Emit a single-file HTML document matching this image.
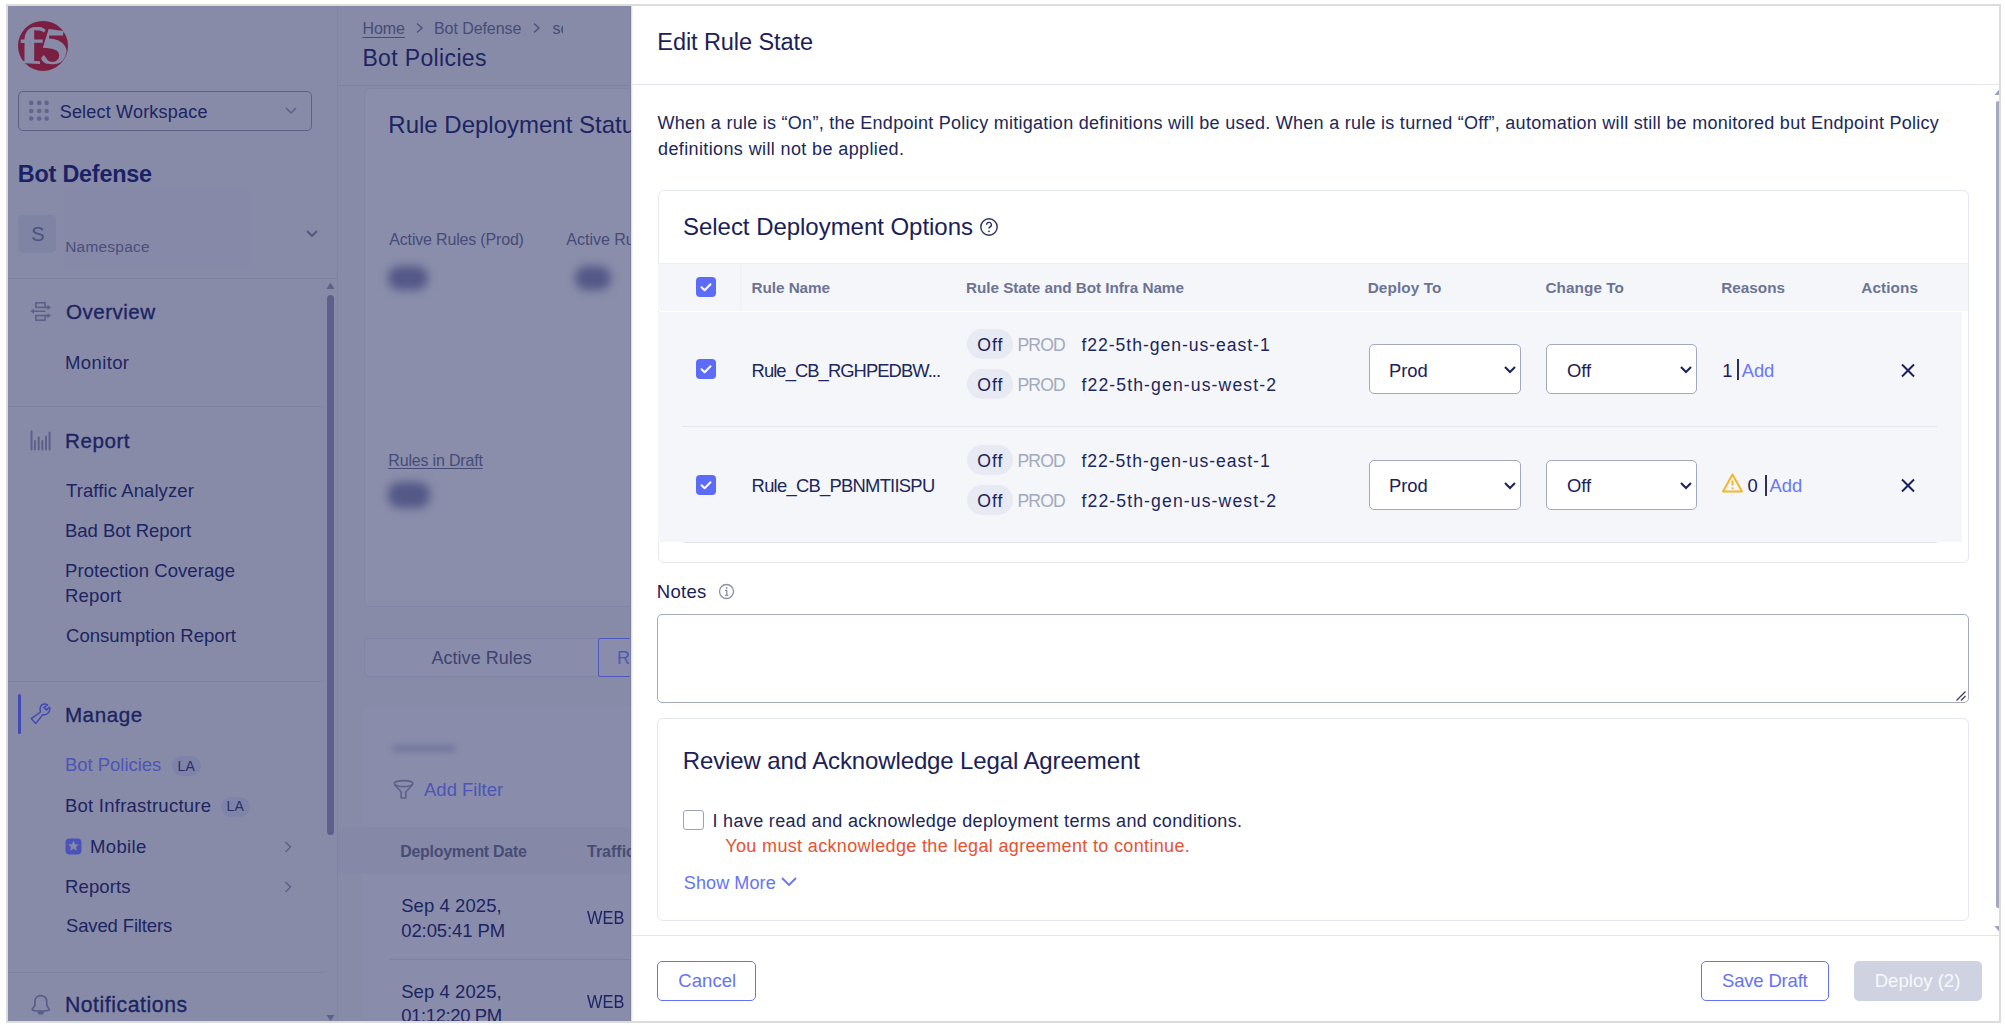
<!DOCTYPE html>
<html><head><meta charset="utf-8">
<style>
html,body{margin:0;padding:0;}
body{width:2005px;height:1025px;background:#fff;position:relative;overflow:hidden;font-family:"Liberation Sans",sans-serif;}
.a{position:absolute;box-sizing:border-box;}
.t{position:absolute;white-space:nowrap;line-height:1;font-family:"Liberation Sans",sans-serif;}
#bg{position:absolute;left:8px;top:6px;width:623px;height:1015px;overflow:hidden;background:#878ba8;}
#bgi{position:absolute;left:-8px;top:-6px;width:2005px;height:1025px;}
#modal{position:absolute;left:631px;top:6px;width:1368px;height:1015px;overflow:hidden;background:#fff;}
#mi{position:absolute;left:-631px;top:-6px;width:2005px;height:1025px;}
</style></head><body>
<div class="a" style="left:6px;top:4px;width:1995px;height:1019px;border:2px solid #dcdcdc;"></div>
<div id="bg"><div id="bgi">
<!-- sidebar border & header line -->
<div class="a" style="left:337px;top:0;width:1px;height:1025px;background:#7f83a3;"></div>
<div class="a" style="left:338px;top:85px;width:300px;height:1px;background:#7f83a3;"></div>
<!-- f5 logo -->
<svg class="a" style="left:0;top:0;" width="80" height="80" viewBox="0 0 80 80">
<circle cx="43" cy="45.9" r="25" fill="#7a1f42"/>
<path fill="#878ba8" d="M24.5 61 L24.5 42.9 L20.7 42.9 L20.7 39.4 L24.5 39.4 C24.6 33 28.5 27.3 35 27.1 L39.8 27.1 C42 27.3 44 28.3 45.6 30.2 L43.8 32.6 C42.5 31.3 41 30.5 39.3 30.4 L34.2 30.3 L34.2 39.4 L42.7 39.4 L42.7 42.7 L34.2 42.7 L34.2 61 L40 61.3 L40 64 L25 63.2 L20 60.5 Z"/>
<path fill="#878ba8" d="M48.65 29.03 L63.5 30.9 L63 35.58 L49.11 35.58 L49.11 38.39 C52 38.6 55 39 57.08 40.03 C61 41.5 64.8 44.5 65.98 48.23 C66.8 50 66.8 52 65.98 53.85 C65.5 56 64.8 57.8 63.63 59.47 C62 61.5 60.5 62.5 58.48 63.22 C56.5 64 54 64.2 51.46 64.15 C49 64.1 47 63.8 45.37 63.22 C43.8 62.5 42.5 61 41.62 59.47 L41.15 58.07 L43.73 55.02 L45.37 56.66 C46.2 58 47 59.5 48.18 60.41 C49.5 61.4 50.5 61.8 51.93 61.81 C53.5 61.8 55 61.5 56.14 60.88 C57.5 60 58.5 59 58.95 57.6 C59.3 56.3 59.3 55 58.95 53.85 C58.5 52.5 57.8 51.4 56.61 50.57 C55 49.5 53.5 49 51.46 48.7 C48.5 48.2 45.5 47.9 42.79 47.76 Z"/>
</svg>
<!-- select workspace -->
<div class="a" style="left:18px;top:91px;width:294px;height:40px;border:1px solid #5b6088;border-radius:5px;"></div>
<svg class="a" style="left:28px;top:100px;" width="22" height="22" viewBox="0 0 22 22">
<g fill="#62668f"><circle cx="3.2" cy="2.9" r="2.3"/><circle cx="11.2" cy="2.9" r="2.3"/><circle cx="18.6" cy="2.9" r="2.3"/>
<circle cx="3.2" cy="11" r="2.3"/><circle cx="11.2" cy="11" r="2.3"/><circle cx="18.6" cy="11" r="2.3"/>
<circle cx="3.2" cy="18.6" r="2.3"/><circle cx="11.2" cy="18.6" r="2.3"/><circle cx="18.6" cy="18.6" r="2.3"/></g></svg>
<svg class="a" style="left:284px;top:106px;" width="14" height="10" viewBox="0 0 14 10"><path d="M2 2 L7 7 L12 2" fill="none" stroke="#5b6088" stroke-width="1.5"/></svg>
<!-- namespace -->
<div class="a" style="left:18px;top:215px;width:38px;height:38px;background:#7f83a4;border-radius:5px;"></div>
<div class="a" style="left:64.5px;top:187px;width:184px;height:80px;background:#8689a7;"></div>
<svg class="a" style="left:305px;top:229px;" width="14" height="10" viewBox="0 0 14 10"><path d="M2 2 L7 7 L12 2" fill="none" stroke="#4f5480" stroke-width="1.8"/></svg>
<!-- dividers -->
<div class="a" style="left:8px;top:278px;width:329px;height:1px;background:#7f83a3;"></div>
<div class="a" style="left:8px;top:406px;width:317px;height:1px;background:#7f83a3;"></div>
<div class="a" style="left:8px;top:681px;width:317px;height:1px;background:#7f83a3;"></div>
<div class="a" style="left:8px;top:972px;width:317px;height:1px;background:#7f83a3;"></div>
<!-- sidebar scrollbar -->
<svg class="a" style="left:326px;top:281px;" width="9" height="9" viewBox="0 0 9 9"><path d="M0.5 8 L4.5 1.5 L8.5 8 Z" fill="#5d6189"/></svg>
<div class="a" style="left:326.5px;top:295px;width:7px;height:540px;background:#5d6189;border-radius:4px;"></div>
<svg class="a" style="left:326px;top:1014px;" width="9" height="8" viewBox="0 0 9 8"><path d="M0.5 1 L4.5 7 L8.5 1 Z" fill="#5d6189"/></svg>
<!-- icons -->
<svg class="a" style="left:0;top:0;" width="60" height="460" viewBox="0 0 60 460">
<g fill="none" stroke="#5c608b" stroke-width="1.6">
<rect x="35.9" y="302.8" width="9.2" height="4.6"/>
<rect x="35.9" y="315.6" width="9.2" height="4.6"/>
<path d="M45 307.4 H48.5 M33 311.3 H45.5 M45 315.6 H48.5"/></g>
<g fill="#5c608b"><path d="M47.5 304.8 L51 307.4 L47.5 310Z"/><path d="M34 308.8 L30.2 311.3 L34 313.8Z"/><path d="M47.5 313 L51 315.6 L47.5 318.2Z"/></g>
<g stroke="#5c608b" stroke-width="2" stroke-linecap="round">
<path d="M31.5 431.5 V449.5"/><path d="M34.9 441 V449.5"/><path d="M38.7 437.6 V449.5"/><path d="M42.3 441 V449.5"/><path d="M46 436.4 V449.5"/><path d="M49.6 432.6 V449.5"/></g>
</svg>
<div class="a" style="left:18px;top:694px;width:3px;height:40px;background:#4049b6;border-radius:1.5px;"></div>
<svg class="a" style="left:0;top:680px;" width="60" height="60" viewBox="0 680 60 60">
<path d="M40.6 712 L31.2 718.6 L35.9 723.4 L42.8 714.6 C45.6 715.2 48.6 713.6 49.6 710.6 C50.1 709.2 49.9 708 49.4 707.2 L46.6 709.9 L43.9 707.6 L47.6 704.9 C46.4 704.2 44.5 703.8 43 704.3 C40.3 705.3 39.3 708.5 40.6 712 Z" fill="none" stroke="#4049b6" stroke-width="1.5" stroke-linejoin="round"/></svg>
<div class="a" style="left:172px;top:756px;width:29px;height:20px;background:#7f82a9;border-radius:10px;"></div>
<div class="a" style="left:221px;top:797px;width:29px;height:20px;background:#7f82a9;border-radius:10px;"></div>
<svg class="a" style="left:65px;top:838px;" width="17" height="17" viewBox="0 0 17 17">
<rect x="0.5" y="0.5" width="16" height="16" rx="4" fill="#4a53b9"/>
<path d="M8.5 2.8 L10.1 6.3 L13.9 6.6 L11 9.1 L11.9 12.8 L8.5 10.8 L5.1 12.8 L6 9.1 L3.1 6.6 L6.9 6.3 Z" fill="#878ba8"/></svg>
<svg class="a" style="left:283px;top:840px;" width="10" height="14" viewBox="0 0 10 14"><path d="M2.5 2 L7.5 7 L2.5 12" fill="none" stroke="#5d6189" stroke-width="1.5"/></svg>
<svg class="a" style="left:283px;top:880px;" width="10" height="14" viewBox="0 0 10 14"><path d="M2.5 2 L7.5 7 L2.5 12" fill="none" stroke="#5d6189" stroke-width="1.5"/></svg>
<svg class="a" style="left:0;top:980px;" width="60" height="45" viewBox="0 980 60 45">
<path d="M34.9 1005.6 V1001.5 C34.9 998 37.5 995.6 40.8 995.6 C44.1 995.6 46.8 998 46.8 1001.5 V1005.6 L49.1 1009 C49.5 1009.8 49 1010.3 48 1010.5 C43.5 1011.3 38 1011.3 33.5 1010.5 C32.5 1010.3 32 1009.8 32.4 1009 Z" fill="none" stroke="#595d89" stroke-width="1.7" stroke-linejoin="round"/>
<path d="M37.4 1012 H44.2 L43 1014.6 H38.6 Z" fill="#595d89"/></svg>
<!-- breadcrumb chevrons -->
<svg class="a" style="left:414px;top:21px;" width="12" height="14" viewBox="0 0 12 14"><path d="M3 2.5 L8 7 L3 11.5" fill="none" stroke="#4d527c" stroke-width="1.4"/></svg>
<svg class="a" style="left:531px;top:21px;" width="12" height="14" viewBox="0 0 12 14"><path d="M3 2.5 L8 7 L3 11.5" fill="none" stroke="#4d527c" stroke-width="1.4"/></svg>
<div class="a" style="left:551px;top:14px;width:12px;height:30px;overflow:hidden;"><div class="t" style="left:1.5px;top:7px;font-size:16px;color:#464b78;">se</div></div>
<!-- card 1 -->
<div class="a" style="left:363.5px;top:87.5px;width:400px;height:519px;background:#8a8eab;border:1px solid #8186a6;border-radius:6px;"></div>
<div class="a" style="left:388px;top:266px;width:40px;height:24px;background:#535887;border-radius:12px;filter:blur(5px);"></div>
<div class="a" style="left:575px;top:266px;width:36px;height:24px;background:#535887;border-radius:12px;filter:blur(5px);"></div>
<div class="a" style="left:388px;top:482px;width:42px;height:26px;background:#535887;border-radius:12px;filter:blur(5px);"></div>
<!-- tabs -->
<div class="a" style="left:364px;top:637.5px;width:400px;height:39px;background:#898dab;border:1px solid #8185a6;border-radius:5px;"></div>
<div class="a" style="left:598px;top:637.5px;width:200px;height:39px;border:1.5px solid #4f58bd;border-radius:2px;"></div>
<!-- table card -->
<div class="a" style="left:362.7px;top:706px;width:400px;height:121px;background:#898dab;border-radius:6px;"></div>
<div class="a" style="left:392px;top:744px;width:64px;height:9px;background:#777ba0;border-radius:5px;filter:blur(2.5px);"></div>
<svg class="a" style="left:380px;top:769.3px;" width="40" height="40" viewBox="380 770 40 40">
<g fill="none" stroke="#5d6189" stroke-width="1.6" stroke-linejoin="round">
<ellipse cx="403.6" cy="784.6" rx="9.3" ry="3"/>
<path d="M394.5 785.5 L401.2 793 V799 H405.8 V793 L412.7 785.5"/></g></svg>
<div class="a" style="left:338px;top:826.6px;width:300px;height:47px;background:#8589a7;"></div>
<div class="a" style="left:362.7px;top:873.6px;width:300px;height:150px;background:#898dab;"></div>
<div class="a" style="left:388.8px;top:959px;width:300px;height:1px;background:#7d81a2;"></div>

<div class="a" style="left:630px;top:0;width:1px;height:1025px;background:#7f829f;"></div>

<div class="t" style="left:59.70px;top:103.00px;font-size:18.0px;color:#1d2462;letter-spacing:0.199px;">Select Workspace</div>
<div class="t" style="left:17.80px;top:163.00px;font-size:23.4px;color:#1a2266;font-weight:700;letter-spacing:-0.216px;">Bot Defense</div>
<div class="t" style="left:31.20px;top:224.00px;font-size:20.0px;color:#4c5180;">S</div>
<div class="t" style="left:65.20px;top:239.00px;font-size:15.4px;color:#4a4f7e;letter-spacing:0.280px;">Namespace</div>
<div class="t" style="left:66.10px;top:302.00px;font-size:20.6px;color:#1d2462;letter-spacing:0.450px;-webkit-text-stroke:0.35px #1d2462;">Overview</div>
<div class="t" style="left:65.10px;top:354.00px;font-size:18.5px;color:#1d2462;letter-spacing:0.362px;">Monitor</div>
<div class="t" style="left:65.00px;top:431.00px;font-size:20.6px;color:#1d2462;letter-spacing:0.542px;-webkit-text-stroke:0.35px #1d2462;">Report</div>
<div class="t" style="left:66.00px;top:482.00px;font-size:18.5px;color:#1d2462;letter-spacing:0.092px;">Traffic Analyzer</div>
<div class="t" style="left:65.00px;top:522.00px;font-size:18.5px;color:#1d2462;letter-spacing:-0.027px;">Bad Bot Report</div>
<div class="t" style="left:65.00px;top:562.00px;font-size:18.5px;color:#1d2462;letter-spacing:0.074px;">Protection Coverage</div>
<div class="t" style="left:65.00px;top:587.00px;font-size:18.5px;color:#1d2462;letter-spacing:0.163px;">Report</div>
<div class="t" style="left:66.00px;top:627.00px;font-size:18.5px;color:#1d2462;letter-spacing:0.016px;">Consumption Report</div>
<div class="t" style="left:64.90px;top:705.00px;font-size:20.6px;color:#1d2462;letter-spacing:0.566px;-webkit-text-stroke:0.35px #1d2462;">Manage</div>
<div class="t" style="left:65.00px;top:756.00px;font-size:18.5px;color:#4d55b8;letter-spacing:-0.037px;">Bot Policies</div>
<div class="t" style="left:65.00px;top:797.00px;font-size:18.5px;color:#1d2462;letter-spacing:0.241px;">Bot Infrastructure</div>
<div class="t" style="left:90.00px;top:838.00px;font-size:18.5px;color:#1d2462;letter-spacing:0.358px;">Mobile</div>
<div class="t" style="left:65.00px;top:878.00px;font-size:18.5px;color:#1d2462;letter-spacing:0.129px;">Reports</div>
<div class="t" style="left:66.00px;top:917.00px;font-size:18.5px;color:#1d2462;letter-spacing:-0.142px;">Saved Filters</div>
<div class="t" style="left:64.90px;top:994.00px;font-size:21.2px;color:#1d2462;letter-spacing:0.566px;-webkit-text-stroke:0.35px #1d2462;">Notifications</div>
<div class="t" style="left:177.50px;top:759.00px;font-size:14.0px;color:#2a3063;letter-spacing:0.214px;">LA</div>
<div class="t" style="left:226.50px;top:799.00px;font-size:14.0px;color:#2a3063;letter-spacing:0.214px;">LA</div>
<div class="t" style="left:362.40px;top:21.00px;font-size:16.0px;color:#464b78;letter-spacing:-0.060px;text-decoration:underline;text-underline-offset:3px;">Home</div>
<div class="t" style="left:434.00px;top:21.00px;font-size:16.0px;color:#464b78;letter-spacing:-0.076px;">Bot Defense</div>
<div class="t" style="left:362.40px;top:47.00px;font-size:23.0px;color:#1d2462;letter-spacing:0.358px;">Bot Policies</div>
<div class="t" style="left:388.30px;top:113.00px;font-size:24.0px;color:#1d2462;">Rule Deployment Status</div>
<div class="t" style="left:389.30px;top:232.00px;font-size:16.0px;color:#464b78;letter-spacing:-0.177px;">Active Rules (Prod)</div>
<div class="t" style="left:566.30px;top:232.00px;font-size:16.0px;color:#464b78;">Active Rules (Draft)</div>
<div class="t" style="left:388.30px;top:453.00px;font-size:16.0px;color:#464b78;letter-spacing:-0.183px;text-decoration:underline;text-underline-offset:2px;">Rules in Draft</div>
<div class="t" style="left:431.50px;top:649.00px;font-size:18.0px;color:#3e4371;letter-spacing:0.024px;">Active Rules</div>
<div class="t" style="left:617.00px;top:649.00px;font-size:18.0px;color:#4f58b8;">Rules</div>
<div class="t" style="left:424.00px;top:781.00px;font-size:18.5px;color:#4c54b8;">Add Filter</div>
<div class="t" style="left:400.20px;top:844.00px;font-size:16.0px;color:#474c75;font-weight:700;letter-spacing:-0.285px;">Deployment Date</div>
<div class="t" style="left:587.00px;top:844.00px;font-size:16.0px;color:#474c75;font-weight:700;">Traffic</div>
<div class="t" style="left:401.20px;top:897.00px;font-size:18.5px;color:#1d2462;letter-spacing:0.066px;">Sep 4 2025,</div>
<div class="t" style="left:401.20px;top:922.00px;font-size:18.5px;color:#1d2462;letter-spacing:-0.089px;">02:05:41 PM</div>
<div class="t" style="left:587.00px;top:909.00px;font-size:18.5px;color:#1d2462;transform:scaleX(0.8852);transform-origin:0.00px 0;">WEB</div>
<div class="t" style="left:401.20px;top:983.00px;font-size:18.5px;color:#1d2462;letter-spacing:0.066px;">Sep 4 2025,</div>
<div class="t" style="left:401.20px;top:1007.00px;font-size:18.5px;color:#1d2462;letter-spacing:-0.389px;">01:12:20 PM</div>
<div class="t" style="left:587.00px;top:993.00px;font-size:18.5px;color:#1d2462;transform:scaleX(0.8852);transform-origin:0.00px 0;">WEB</div>
</div></div>
<div id="modal"><div id="mi">
<div class="a" style="left:631px;top:6px;width:2px;height:1015px;background:linear-gradient(90deg,#d3d6e3,#fff);"></div>
<div class="a" style="left:631px;top:84px;width:1368px;height:1px;background:#e4e6ee;"></div>
<!-- deployment card -->
<div class="a" style="left:657.5px;top:189.5px;width:1311px;height:373px;border:1px solid #e6e8ef;border-radius:6px;"></div>
<div class="a" style="left:658px;top:262.5px;width:1310px;height:48.5px;background:#f5f6fa;border-top:1px solid #eceef3;"></div>
<div class="a" style="left:740px;top:263px;width:1px;height:48px;background:#f0f1f5;"></div>
<div class="a" style="left:658px;top:312px;width:1304px;height:230px;background:#f5f6fa;"></div>
<div class="a" style="left:683px;top:426px;width:1254px;height:1px;background:#e3e5ed;"></div>
<div class="a" style="left:683px;top:541.5px;width:1254px;height:1px;background:#e3e5ed;"></div>
<!-- help icon -->
<svg class="a" style="left:979px;top:217px;" width="20" height="20" viewBox="0 0 20 20">
<circle cx="10" cy="10" r="8.2" fill="none" stroke="#2a3160" stroke-width="1.4"/>
<path d="M7.6 7.8 a2.4 2.4 0 1 1 3.3 2.2 c-0.7 0.3 -0.9 0.8 -0.9 1.6" fill="none" stroke="#2a3160" stroke-width="1.4"/>
<circle cx="10" cy="14.3" r="0.9" fill="#2a3160"/></svg>
<!-- checkboxes -->
<svg class="a" style="left:696px;top:277px;" width="20" height="20" viewBox="0 0 20 20"><rect width="20" height="20" rx="4" fill="#5c6cf6"/><path d="M5.5 10.2 L8.6 13.2 L14.5 7.2" fill="none" stroke="#fff" stroke-width="2" stroke-linecap="round" stroke-linejoin="round"/></svg>
<svg class="a" style="left:696px;top:359px;" width="20" height="20" viewBox="0 0 20 20"><rect width="20" height="20" rx="4" fill="#5c6cf6"/><path d="M5.5 10.2 L8.6 13.2 L14.5 7.2" fill="none" stroke="#fff" stroke-width="2" stroke-linecap="round" stroke-linejoin="round"/></svg>
<svg class="a" style="left:696px;top:474.5px;" width="20" height="20" viewBox="0 0 20 20"><rect width="20" height="20" rx="4" fill="#5c6cf6"/><path d="M5.5 10.2 L8.6 13.2 L14.5 7.2" fill="none" stroke="#fff" stroke-width="2" stroke-linecap="round" stroke-linejoin="round"/></svg>
<!-- pills -->
<div class="a" style="left:966.5px;top:329px;width:46px;height:30px;background:#e7e9f3;border-radius:15px;"></div>
<div class="a" style="left:966.5px;top:369.3px;width:46px;height:30px;background:#e7e9f3;border-radius:15px;"></div>
<div class="a" style="left:966.5px;top:444.5px;width:46px;height:30px;background:#e7e9f3;border-radius:15px;"></div>
<div class="a" style="left:966.5px;top:484.8px;width:46px;height:30px;background:#e7e9f3;border-radius:15px;"></div>
<!-- selects -->
<div class="a" style="left:1369px;top:344px;width:152px;height:50px;background:#fff;border:1.5px solid #a4a8bd;border-radius:5px;"></div>
<div class="a" style="left:1546px;top:344px;width:151px;height:50px;background:#fff;border:1.5px solid #a4a8bd;border-radius:5px;"></div>
<div class="a" style="left:1369px;top:459.5px;width:152px;height:50px;background:#fff;border:1.5px solid #a4a8bd;border-radius:5px;"></div>
<div class="a" style="left:1546px;top:459.5px;width:151px;height:50px;background:#fff;border:1.5px solid #a4a8bd;border-radius:5px;"></div>
<svg class="a" style="left:1503px;top:364px;" width="14" height="12" viewBox="0 0 14 12"><path d="M2 3 L7 8 L12 3" fill="none" stroke="#1b2158" stroke-width="2"/></svg>
<svg class="a" style="left:1679px;top:364px;" width="14" height="12" viewBox="0 0 14 12"><path d="M2 3 L7 8 L12 3" fill="none" stroke="#1b2158" stroke-width="2"/></svg>
<svg class="a" style="left:1503px;top:479.5px;" width="14" height="12" viewBox="0 0 14 12"><path d="M2 3 L7 8 L12 3" fill="none" stroke="#1b2158" stroke-width="2"/></svg>
<svg class="a" style="left:1679px;top:479.5px;" width="14" height="12" viewBox="0 0 14 12"><path d="M2 3 L7 8 L12 3" fill="none" stroke="#1b2158" stroke-width="2"/></svg>
<!-- reason separators -->
<div class="a" style="left:1737.4px;top:359.3px;width:1.4px;height:21px;background:#2a3160;"></div>
<div class="a" style="left:1765.2px;top:474.5px;width:1.4px;height:21px;background:#2a3160;"></div>
<!-- warning -->
<svg class="a" style="left:1721px;top:472px;" width="23" height="22" viewBox="0 0 23 22">
<path d="M11.5 2.5 L21 19.5 H2 Z" fill="none" stroke="#f4b62a" stroke-width="2" stroke-linejoin="round"/>
<path d="M11.5 8.5 V13.5" stroke="#f4b62a" stroke-width="2"/><circle cx="11.5" cy="16.3" r="1.1" fill="#f4b62a"/></svg>
<!-- X icons -->
<svg class="a" style="left:1899px;top:361.5px;" width="18" height="17" viewBox="0 0 18 17"><path d="M3 2.5 L15 14.5 M15 2.5 L3 14.5" stroke="#1b2158" stroke-width="2"/></svg>
<svg class="a" style="left:1899px;top:477px;" width="18" height="17" viewBox="0 0 18 17"><path d="M3 2.5 L15 14.5 M15 2.5 L3 14.5" stroke="#1b2158" stroke-width="2"/></svg>
<!-- notes info icon -->
<svg class="a" style="left:718px;top:583px;" width="17" height="17" viewBox="0 0 17 17">
<circle cx="8.5" cy="8.5" r="7" fill="none" stroke="#8a8fa6" stroke-width="1.3"/>
<path d="M7 7.3 H8.8 V12.3 M7 12.3 H10.3" fill="none" stroke="#8a8fa6" stroke-width="1.3"/><circle cx="8.6" cy="4.9" r="0.9" fill="#8a8fa6"/></svg>
<!-- textarea -->
<div class="a" style="left:657px;top:613.5px;width:1312px;height:89.5px;border:1.5px solid #a6aabe;border-radius:5px;"></div>
<svg class="a" style="left:1955px;top:690px;" width="12" height="12" viewBox="0 0 12 12"><path d="M1.5 10.5 L10.5 1.5 M6 10.5 L10.5 6" stroke="#3a3f5e" stroke-width="1.3"/></svg>
<!-- legal card -->
<div class="a" style="left:657px;top:718px;width:1311.5px;height:202.5px;border:1px solid #e6e8ef;border-radius:6px;"></div>
<div class="a" style="left:683px;top:810px;width:20.5px;height:20px;border:1.5px solid #9da2b7;border-radius:3px;"></div>
<svg class="a" style="left:780px;top:875px;" width="18" height="13" viewBox="0 0 18 13"><path d="M2 3 L9 10 L16 3" fill="none" stroke="#6673f5" stroke-width="1.8"/></svg>
<!-- footer -->
<div class="a" style="left:631px;top:935px;width:1368px;height:1px;background:#e3e5ee;"></div>
<div class="a" style="left:657px;top:961px;width:99px;height:40px;border:1.5px solid #6673f5;border-radius:5px;"></div>
<div class="a" style="left:1701px;top:961px;width:128px;height:40px;border:1.5px solid #6673f5;border-radius:5px;"></div>
<div class="a" style="left:1854px;top:961px;width:128px;height:40px;background:#cfd3e1;border-radius:5px;"></div>
<!-- modal scrollbar -->
<svg class="a" style="left:1994px;top:88px;" width="6" height="8" viewBox="0 0 6 8"><path d="M0.5 7 L5.5 1 L5.5 7 Z" fill="#9ea2b8"/></svg>
<div class="a" style="left:1995.5px;top:101px;width:4px;height:807px;background:#a5a9bc;border-radius:2px;"></div>
<svg class="a" style="left:1994px;top:925px;" width="6" height="8" viewBox="0 0 6 8"><path d="M0.5 1 L5.5 1 L5.5 7 Z" fill="#9ea2b8"/></svg>

<div class="t" style="left:657.30px;top:31.00px;font-size:23.5px;color:#1b2158;letter-spacing:-0.070px;">Edit Rule State</div>
<div class="t" style="left:657.50px;top:114.00px;font-size:18.0px;color:#20275a;letter-spacing:0.269px;">When a rule is “On”, the Endpoint Policy mitigation definitions will be used. When a rule is turned “Off”, automation will still be monitored but Endpoint Policy</div>
<div class="t" style="left:658.00px;top:140.00px;font-size:18.0px;color:#20275a;letter-spacing:0.382px;">definitions will not be applied.</div>
<div class="t" style="left:683.00px;top:215.00px;font-size:24.0px;color:#1b2158;letter-spacing:-0.034px;">Select Deployment Options</div>
<div class="t" style="left:751.60px;top:280.00px;font-size:15.3px;color:#6c7493;font-weight:700;letter-spacing:-0.069px;">Rule Name</div>
<div class="t" style="left:966.00px;top:280.00px;font-size:15.3px;color:#6c7493;font-weight:700;letter-spacing:-0.050px;">Rule State and Bot Infra Name</div>
<div class="t" style="left:1367.70px;top:280.00px;font-size:15.3px;color:#6c7493;font-weight:700;letter-spacing:0.105px;">Deploy To</div>
<div class="t" style="left:1545.50px;top:280.00px;font-size:15.3px;color:#6c7493;font-weight:700;letter-spacing:0.069px;">Change To</div>
<div class="t" style="left:1721.30px;top:280.00px;font-size:15.3px;color:#6c7493;font-weight:700;letter-spacing:-0.010px;">Reasons</div>
<div class="t" style="left:1861.30px;top:280.00px;font-size:15.3px;color:#6c7493;font-weight:700;letter-spacing:0.102px;">Actions</div>
<div class="t" style="left:977.30px;top:337.00px;font-size:17.6px;color:#1b2158;letter-spacing:0.972px;">Off</div>
<div class="t" style="left:1017.40px;top:337.00px;font-size:17.6px;color:#a3a9bd;letter-spacing:-0.842px;">PROD</div>
<div class="t" style="left:1081.50px;top:337.00px;font-size:17.6px;color:#20275a;letter-spacing:0.950px;">f22-5th-gen-us-east-1</div>
<div class="t" style="left:977.30px;top:377.00px;font-size:17.6px;color:#1b2158;letter-spacing:0.972px;">Off</div>
<div class="t" style="left:1017.40px;top:377.00px;font-size:17.6px;color:#a3a9bd;letter-spacing:-0.842px;">PROD</div>
<div class="t" style="left:1081.50px;top:377.00px;font-size:17.6px;color:#20275a;letter-spacing:1.119px;">f22-5th-gen-us-west-2</div>
<div class="t" style="left:1389.00px;top:362.00px;font-size:18.4px;color:#1b2158;letter-spacing:-0.073px;">Prod</div>
<div class="t" style="left:1567.00px;top:362.00px;font-size:18.4px;color:#1b2158;letter-spacing:-0.041px;">Off</div>
<div class="t" style="left:977.30px;top:453.00px;font-size:17.6px;color:#1b2158;letter-spacing:0.972px;">Off</div>
<div class="t" style="left:1017.40px;top:453.00px;font-size:17.6px;color:#a3a9bd;letter-spacing:-0.842px;">PROD</div>
<div class="t" style="left:1081.50px;top:453.00px;font-size:17.6px;color:#20275a;letter-spacing:0.950px;">f22-5th-gen-us-east-1</div>
<div class="t" style="left:977.30px;top:493.00px;font-size:17.6px;color:#1b2158;letter-spacing:0.972px;">Off</div>
<div class="t" style="left:1017.40px;top:493.00px;font-size:17.6px;color:#a3a9bd;letter-spacing:-0.842px;">PROD</div>
<div class="t" style="left:1081.50px;top:493.00px;font-size:17.6px;color:#20275a;letter-spacing:1.119px;">f22-5th-gen-us-west-2</div>
<div class="t" style="left:1389.00px;top:477.00px;font-size:18.4px;color:#1b2158;letter-spacing:-0.073px;">Prod</div>
<div class="t" style="left:1567.00px;top:477.00px;font-size:18.4px;color:#1b2158;letter-spacing:-0.041px;">Off</div>
<div class="t" style="left:751.60px;top:362.00px;font-size:18.4px;color:#20275a;letter-spacing:-0.941px;">Rule_CB_RGHPEDBW...</div>
<div class="t" style="left:751.60px;top:477.00px;font-size:18.4px;color:#20275a;letter-spacing:-0.744px;">Rule_CB_PBNMTIISPU</div>
<div class="t" style="left:1722.20px;top:362.00px;font-size:18.4px;color:#1b2158;">1</div>
<div class="t" style="left:1741.80px;top:362.00px;font-size:18.4px;color:#6a78f6;letter-spacing:-0.147px;">Add</div>
<div class="t" style="left:1747.50px;top:477.00px;font-size:18.4px;color:#1b2158;">0</div>
<div class="t" style="left:1769.40px;top:477.00px;font-size:18.4px;color:#6a78f6;letter-spacing:0.053px;">Add</div>
<div class="t" style="left:656.80px;top:583.00px;font-size:18.5px;color:#1b2158;letter-spacing:0.281px;">Notes</div>
<div class="t" style="left:682.80px;top:749.00px;font-size:24.0px;color:#1b2158;letter-spacing:-0.125px;">Review and Acknowledge Legal Agreement</div>
<div class="t" style="left:712.40px;top:812.00px;font-size:18.0px;color:#20275a;letter-spacing:0.344px;">I have read and acknowledge deployment terms and conditions.</div>
<div class="t" style="left:725.30px;top:837.00px;font-size:18.0px;color:#e8522f;letter-spacing:0.344px;">You must acknowledge the legal agreement to continue.</div>
<div class="t" style="left:683.80px;top:874.00px;font-size:18.0px;color:#6673f5;letter-spacing:0.109px;">Show More</div>
<div class="t" style="left:678.20px;top:972.00px;font-size:18.5px;color:#6673f5;letter-spacing:0.085px;">Cancel</div>
<div class="t" style="left:1722.00px;top:972.00px;font-size:18.5px;color:#6673f5;letter-spacing:-0.184px;">Save Draft</div>
<div class="t" style="left:1874.70px;top:972.00px;font-size:18.5px;color:#f7f8fc;letter-spacing:0.036px;">Deploy (2)</div>
</div></div>
</body></html>
